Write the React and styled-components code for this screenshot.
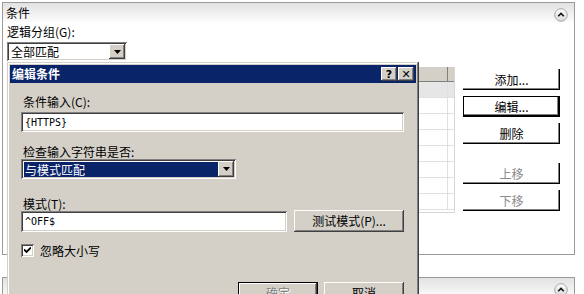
import styled, { createGlobalStyle, css } from "styled-components"

const GlobalStyle = createGlobalStyle`
body {
  margin: 0;
  background: #fff;
  font-family: "Noto Sans CJK SC", "Liberation Sans", sans-serif;
  font-size: 12px;
  color: #000;
}
#root {
  width: 584px;
  height: 294px;
  overflow: hidden;
  position: relative;
}
`

const raised = css`
  box-shadow: inset -1px -1px #404040, inset 1px 1px #fff, inset -2px -2px #808080, inset 2px 2px #d4d0c8;
`
const sunken = css`
  box-shadow: inset 1px 1px #808080, inset -1px -1px #fff, inset 2px 2px #404040, inset -2px -2px #d4d0c8;
`

const Screen = styled.div`
  padding: 2px 9px 0 2px;
`

const Panel = styled.section`
  border: 1px solid #9a9a9a;
  margin-top: ${(p) => (p.$gap ? "22px" : "0")};
`

const PanelHeader = styled.div`
  height: 20px;
  padding: 0 6px 0 3px;
  display: flex;
  align-items: center;
  justify-content: space-between;
  background: linear-gradient(#e2e2e2, #fafafa 90%, #fff);
  line-height: 12px;
`

const CollapseWrap = styled.span`
  display: flex;
  margin-top: 4px;
`

const PanelBody = styled.div`
  height: 228px;
  padding: 3px 14px 0 4px;
  display: flex;
  flex-direction: column;
`

const Label = styled.div`
  line-height: 12px;
  height: 12px;
  white-space: nowrap;
  margin-top: ${(p) => p.$top || 0}px;
  padding-left: ${(p) => p.$indent || 0}px;
`

const ComboBox = styled.div`
  width: ${(p) => p.$width}px;
  height: ${(p) => p.$height || 20}px;
  margin-top: ${(p) => p.$top || 0}px;
  box-sizing: border-box;
  padding: 3px 2px 2px 3px;
  display: flex;
  background: #fff;
  ${sunken}
`

const ComboValue = styled.div`
  flex: 1;
  display: flex;
  align-items: center;
  padding-left: 1px;
  line-height: 12px;
  background: ${(p) => (p.$selected ? "#0a246a" : "#fff")};
  color: ${(p) => (p.$selected ? "#fff" : "#000")};
`

const DropButton = styled.div`
  width: 16px;
  margin-top: -1px;
  background: #d4d0c8;
  display: flex;
  align-items: center;
  justify-content: center;
  ${raised}
`

const ListRow = styled.div`
  display: flex;
  margin-top: 6px;
  gap: 8px;
`

const Grid = styled.div`
  flex: 1;
  height: 146px;
  overflow: hidden;
  border: 1px solid #d6d6d6;
  border-top: none;
  box-sizing: border-box;
`

const GridRow = styled.div`
  display: flex;
  height: ${(p) => (p.$header ? 15 : 16)}px;
  box-sizing: border-box;
  border-bottom: 1px solid ${(p) => (p.$header ? "#808080" : "#e0e0e0")};
  background: ${(p) => (p.$header ? "#d4d0c8" : p.$selected ? "#e6e6e6" : "#fff")};
`

const GridCell = styled.div`
  flex: ${(p) => (p.$narrow ? "0 0 6px" : "1")};
  border-right: 1px solid ${(p) => (p.$header ? "#808080" : "#e0e0e0")};
  &:last-child {
    border-right: none;
  }
`

const ButtonColumn = styled.div`
  width: 97px;
  padding-top: 2px;
  display: flex;
  flex-direction: column;
  gap: 6px;
`

const PanelButton = styled.div`
  height: 21px;
  box-sizing: border-box;
  display: flex;
  align-items: center;
  justify-content: center;
  line-height: 12px;
  background: #fff;
  color: ${(p) => (p.$disabled ? "#8a8a8a" : "#000")};
  margin-top: ${(p) => p.$top || 0}px;
  box-shadow: ${(p) =>
    p.$default
      ? "inset 0 0 0 1px #000, inset -2px -2px #000, inset -3px -3px #808080"
      : "inset -1px -1px #000, inset -2px -2px #808080"};
`

const Dialog = styled.div`
  position: absolute;
  left: 7px;
  top: 62px;
  width: 412px;
  height: 270px;
  box-sizing: border-box;
  padding: 3px;
  background: #d4d0c8;
  box-shadow: inset -1px -1px #404040, inset 1px 1px #d4d0c8, inset -2px -2px #808080, inset 2px 2px #fff;
`

const TitleBar = styled.div`
  height: 18px;
  background: #0a246a;
  display: flex;
  align-items: center;
  justify-content: space-between;
  padding: 0 2px 0 2px;
`

const Title = styled.span`
  color: #fff;
  font-weight: bold;
  font-size: 12px;
  line-height: 12px;
`

const CaptionButtons = styled.div`
  display: flex;
  gap: 1px;
`

const CaptionButton = styled.div`
  width: 16px;
  height: 14px;
  background: #d4d0c8;
  display: flex;
  align-items: center;
  justify-content: center;
  font-family: "DejaVu Sans", sans-serif;
  font-weight: bold;
  font-size: 11px;
  line-height: 11px;
  ${raised}
`

const DialogBody = styled.div`
  padding: 0 12px 0 11px;
  display: flex;
  flex-direction: column;
`

const TextBox = styled.div`
  width: ${(p) => (p.$width ? `${p.$width}px` : "auto")};
  height: ${(p) => p.$height || 20}px;
  margin-top: ${(p) => p.$top || 0}px;
  box-sizing: border-box;
  padding: 0 4px;
  display: flex;
  align-items: center;
  background: #fff;
  font-family: "DejaVu Sans Mono", "Liberation Mono", monospace;
  font-size: 10px;
  ${sunken}
`

const FieldRow = styled.div`
  display: flex;
  align-items: center;
  justify-content: space-between;
  margin-top: ${(p) => p.$top || 0}px;
`

const DialogButton = styled.div`
  width: ${(p) => p.$width}px;
  height: 22px;
  box-sizing: border-box;
  display: flex;
  align-items: center;
  justify-content: center;
  background: #d4d0c8;
  line-height: 12px;
  color: ${(p) => (p.$disabled ? "#808080" : "#000")};
  text-shadow: ${(p) => (p.$disabled ? "1px 1px #fff" : "none")};
  ${(p) =>
    p.$default
      ? css`box-shadow: inset 0 0 0 1px #000, inset -2px -2px #404040, inset 2px 2px #fff, inset -3px -3px #808080;`
      : raised}
`

const CheckRow = styled.label`
  display: flex;
  align-items: center;
  gap: 6px;
  margin-top: 12px;
  line-height: 13px;
`

const CheckBox = styled.span`
  width: 13px;
  height: 13px;
  box-sizing: border-box;
  background: #fff;
  display: flex;
  align-items: center;
  justify-content: center;
  ${sunken}
`

const ButtonBar = styled.div`
  display: flex;
  justify-content: flex-end;
  gap: 6px;
  margin-top: 25px;
`

const Arrow = () => (
  <svg width="7" height="4" viewBox="0 0 7 4">
    <path d="M0 0h7L3.5 4z" fill="#000" />
  </svg>
)

const Collapse = () => (
  <CollapseWrap>
    <svg width="14" height="14" viewBox="0 0 14 14">
      <defs>
        <linearGradient id="cg" x1="0" y1="0" x2="0" y2="1">
          <stop offset="0" stopColor="#fdfdfd" />
          <stop offset="1" stopColor="#d8d8d8" />
        </linearGradient>
      </defs>
      <circle cx="7" cy="7" r="6.3" fill="url(#cg)" stroke="#a8a8a8" />
      <path d="M4.2 8.3L7 5.5l2.8 2.8" fill="none" stroke="#111" strokeWidth="1.6" />
    </svg>
  </CollapseWrap>
)

const rows = Array.from({ length: 8 })

export default function App() {
  return (
    <>
      <GlobalStyle />
      <Screen>
        <Panel>
          <PanelHeader>
            <span>条件</span>
            <Collapse />
          </PanelHeader>
          <PanelBody>
            <Label>逻辑分组(G):</Label>
            <ComboBox $width={120} $height={19} $top={4}>
              <ComboValue>全部匹配</ComboValue>
              <DropButton>
                <Arrow />
              </DropButton>
            </ComboBox>
            <ListRow>
              <Grid>
                <GridRow $header>
                  <GridCell $header />
                  <GridCell $header $narrow />
                </GridRow>
                {rows.map((_, i) => (
                  <GridRow key={i} $selected={i === 0}>
                    <GridCell />
                    <GridCell $narrow />
                  </GridRow>
                ))}
              </Grid>
              <ButtonColumn>
                <PanelButton>添加...</PanelButton>
                <PanelButton $default>编辑...</PanelButton>
                <PanelButton>删除</PanelButton>
                <PanelButton $disabled $top={13}>上移</PanelButton>
                <PanelButton $disabled>下移</PanelButton>
              </ButtonColumn>
            </ListRow>
          </PanelBody>
        </Panel>
        <Panel $gap>
          <PanelHeader>
            <span />
            <Collapse />
          </PanelHeader>
        </Panel>
      </Screen>

      <Dialog>
        <TitleBar>
          <Title>编辑条件</Title>
          <CaptionButtons>
            <CaptionButton>?</CaptionButton>
            <CaptionButton>✕</CaptionButton>
          </CaptionButtons>
        </TitleBar>
        <DialogBody>
          <Label $top={13} $indent={2}>条件输入(C):</Label>
          <TextBox $top={4}>{"{HTTPS}"}</TextBox>
          <Label $top={14} $indent={2}>检查输入字符串是否:</Label>
          <ComboBox $width={215} $top={1}>
            <ComboValue $selected>与模式匹配</ComboValue>
            <DropButton>
              <Arrow />
            </DropButton>
          </ComboBox>
          <Label $top={19} $indent={2}>模式(T):</Label>
          <FieldRow>
            <TextBox $width={266} $height={21}>^OFF$</TextBox>
            <DialogButton $width={110}>测试模式(P)...</DialogButton>
          </FieldRow>
          <CheckRow>
            <CheckBox>
              <svg width="7" height="7" viewBox="0 0 7 7">
                <path d="M0 2.5l2.5 2.5L7 0.5" fill="none" stroke="#000" strokeWidth="1.8" />
              </svg>
            </CheckBox>
            忽略大小写
          </CheckRow>
          <ButtonBar>
            <DialogButton $width={80} $default $disabled>确定</DialogButton>
            <DialogButton $width={80}>取消</DialogButton>
          </ButtonBar>
        </DialogBody>
      </Dialog>
    </>
  )
}
